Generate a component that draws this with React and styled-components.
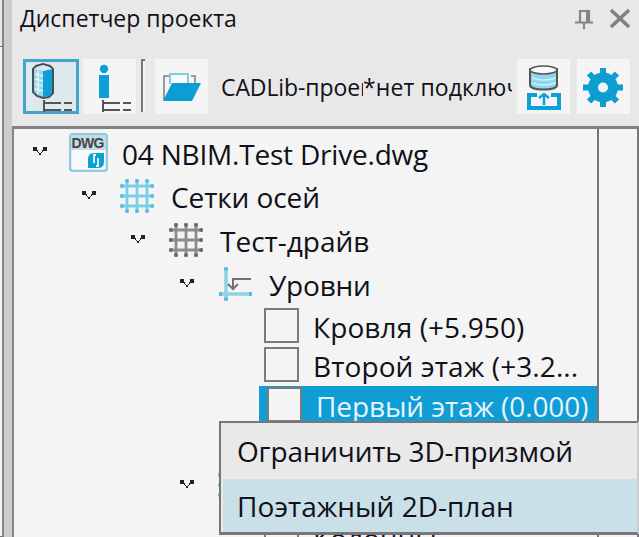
import React from "react";
import styled, { createGlobalStyle } from "styled-components";

const GlobalStyle = createGlobalStyle`
    * { box-sizing: border-box; }
    body {
        margin: 0;
        overflow: hidden;
        background: #ccc;
        font-family: "Open Sans", "Noto Sans", sans-serif;
        color: #101018;
    }
`;

const Window = styled.div`
    width: 639px;
    height: 537px;
    display: flex;
    position: relative;
    overflow: hidden;
`;

const LeftEdge = styled.div`
    width: 12px;
    display: flex;
    flex-direction: column;
    background: #cdcdcd;
`;

const EdgeTab = styled.div`
    width: 4px;
    height: ${props => props.$height};
    background: ${props => props.$color};
    border-right: 2px solid #858585;
    border-bottom: 1px solid #777;
`;

const Panel = styled.div`
    flex: 1;
    min-width: 0;
    display: flex;
    flex-direction: column;
    background: #e8e8e8;
`;

const TitleBar = styled.div`
    height: 40px;
    display: flex;
    align-items: flex-start;
    padding-left: 8px;
`;

const TitleIcons = styled.div`
    margin-left: auto;
    padding: 8px 9px 0 0;
    display: flex;
    gap: 17px;
`;

const Toolbar = styled.div`
    height: 86px;
    display: flex;
    align-items: flex-start;
    padding: 19px 0 0 11px;
`;

const ToolButton = styled.div`
    width: ${props => props.$width || "53px"};
    height: 55px;
    flex: none;
    margin-right: ${props => props.$gap || "0"};
    background: ${props => (props.$active ? "#dde9ed" : "#f5f5f5")};
    border: 3px solid ${props => (props.$active ? "#43a5c9" : "#f5f5f5")};

    svg { display: block; margin: -3px; }
`;

const Separator = styled.div`
    width: 4px;
    height: 53px;
    margin-right: 10px;
    border-left: 2px solid #777;
    border-top: 2px solid #777;
    background: #f4f4f4;
`;

const ProjectName = styled.div`
    width: 304px;
    height: 55px;
    flex: none;
    overflow: hidden;
    margin-right: 5px;
    padding: 10px 0 0 13px;
    display: flex;
`;

const Label = styled.span`
    display: block;
    width: ${props => props.$clip || "auto"};
    overflow: ${props => (props.$clip ? "hidden" : "visible")};
    flex: none;
    padding-top: ${props => props.$drop || "0"};
    white-space: nowrap;
    font-size: ${props => props.$size || "28px"};
    line-height: 36px;
    letter-spacing: ${props => props.$spacing || "0"};
    color: ${props => props.$color || "inherit"};
`;

const Tree = styled.div`
    height: 411px;
    display: flex;
    overflow: hidden;
    background: #f4f4f4;
    border-top: 3px solid #828282;
    border-left: 2px solid #858585;
`;

const TreeBody = styled.div`
    width: 585px;
    padding-top: 1px;
    border-right: 2px solid #777;
`;

const Gutter = styled.div`
    flex: 1;
    border-right: 2px solid #777;
`;

const Row = styled.div`
    height: ${props => props.$height || "44px"};
    display: flex;
    align-items: center;
    padding-left: ${props => props.$indent};
    margin-left: ${props => props.$offset || "0"};
    margin-top: ${props => props.$shift || "0"};
    background: ${props => (props.$selected ? "#109cd5" : "transparent")};
`;

const IconCell = styled.div`
    width: 52px;
    height: 40px;
    flex: none;
    margin-right: 8px;
    display: flex;
    align-items: center;
    justify-content: center;
`;

const Arrow = styled.svg`
    width: 14px;
    height: 8px;
    flex: none;
    margin-right: 15px;
    margin-bottom: 2px;
`;

const CheckBox = styled.div`
    width: 35px;
    height: 35px;
    flex: none;
    margin-right: 14px;
    background: #f5f5f5;
    border: 2px solid #7b7b7b;
`;

const Menu = styled.div`
    position: absolute;
    left: 219px;
    top: 421px;
    width: 420px;
    height: 114px;
    border: 2px solid #777;
    border-right: 2px solid #ccc;
    border-bottom-width: 3px;
    background: #e9e9e9;
`;

const MenuItem = styled.div`
    height: ${props => props.$height};
    margin-left: 2px;
    display: flex;
    align-items: center;
    padding-left: 14px;
    background: ${props => (props.$hover ? "#c9e0e8" : "transparent")};
`;

const Chevron = () => (
    <Arrow viewBox="0 0 14 8" shapeRendering="crispEdges">
        <path d="M0 0h4v4H0zM10 0h4v4h-4zM4 3h1v2H4zM9 3h1v2H9zM5 5h1v1H5zM8 5h1v1H8zM6 6h2v2H6z" fill="#222" />
    </Arrow>
);

const Grid = ({ color, dot }) => (
    <svg width="34" height="34" viewBox="0 0 34 34">
        <path d="M7 0V34M17 0V34M27 0V34M0 7H34M0 17H34M0 27H34" stroke={color} strokeWidth="2.8" fill="none" />
        <path d="M7 0.500V34M17 0.500V34M27 0.500V34" stroke={dot} strokeWidth="3.6" strokeDasharray="3 27" />
        <path d="M0.500 7H34M0.500 17H34M0.500 27H34" stroke={dot} strokeWidth="3.6" strokeDasharray="3 27" />
    </svg>
);

const BlueGrid = () => <Grid color="#7bcde8" dot="#56bce0" />;

const DwgIcon = () => (
    <svg width="39" height="39" viewBox="0 0 39 39">
        <rect x="1" y="1" width="37" height="37" rx="3" fill="#fafafa" stroke="#8bcbe2" strokeWidth="2.5" />
        <path d="M2 2H37V17H2Z" fill="#c3dce4" />
        <text x="2.5" y="15" fontFamily="Liberation Sans" fontWeight="700" fontSize="14" textLength="33" fill="#444">DWG</text>
        <path d="M19 26q0-6 6-6h10v9q0 6-6 6H19z" fill="#0ca0d3" />
        <path d="M27 22h-2v8M27 33h2v-8" stroke="#eef8fb" strokeWidth="1.8" fill="none" />
    </svg>
);

const LevelIcon = () => (
    <svg width="36" height="36" viewBox="0 0 36 36">
        <path d="M9 1V35M2 28H35" stroke="#8fd0e6" strokeWidth="3.5" />
        <path d="M7 3h4M7 33h4" stroke="#5bbbdc" strokeWidth="3" />
        <path d="M2 28h3M32 28h3" stroke="#5bbbdc" strokeWidth="4" />
        <path d="M34 13H16V23M11 18l5 5 5-5" stroke="#707070" strokeWidth="2" fill="none" />
    </svg>
);

const ListLines = ({ x = 0 }) => (
    <path
        transform={`translate(${x} 0)`}
        d="M21 41V53M21 44H38M41 44H49M21 51H38M41 51H49"
        stroke="#555"
        strokeWidth="2"
        fill="none"
    />
);

const rows = [
    { indent: "19px", icon: <DwgIcon />, text: "04 NBIM.Test Drive.dwg", spacing: "-0.2px", drop: "3px" },
    { indent: "68px", icon: <BlueGrid />, text: "Сетки осей", spacing: "-0.1px", drop: "2px" },
    { indent: "117px", icon: <Grid color="#8c8c8c" dot="#666" />, text: "Тест-драйв", spacing: "0", drop: "2px" },
    { indent: "166px", icon: <LevelIcon />, text: "Уровни", spacing: "-0.2px", drop: "2px" },
];

const App = () => (
    <>
        <GlobalStyle />
        <Window>
            <LeftEdge>
                <EdgeTab $height="47px" $color="#e8e8e8" />
                <EdgeTab $height="490px" $color="#f4f4f4" />
            </LeftEdge>
            <Panel>
                <TitleBar>
                    <Label $size="23px">Диспетчер проекта</Label>
                    <TitleIcons>
                        <svg width="18" height="22" viewBox="0 0 18 22">
                            <path d="M4 3H14V14M5 3V14M0 14.500H18M9 15V21" stroke="#858585" strokeWidth="2.2" fill="none" />
                            <path d="M11 3h4v11h-4z" fill="#858585" />
                        </svg>
                        <svg width="20" height="22" viewBox="0 0 20 22">
                            <path d="M1 2L19 19M19 2L1 19" stroke="#808080" strokeWidth="3.5" />
                        </svg>
                    </TitleIcons>
                </TitleBar>
                <Toolbar>
                    <ToolButton $active $width="56px" $gap="4px">
                        <svg width="56" height="55" viewBox="0 0 56 55">
                            <path d="M10 10l3-3 7-2 7 2 3 3v24l-4 4-6 1-6-2-4-4z" fill="#9bd5e9" stroke="#4a4f54" strokeWidth="2" />
                            <path d="M20 12l9-2v24l-3 3-6 1z" fill="#0ca0d7" />
                            <path d="M11 10l9 2 9-2-3-2-6-2-6 2z" fill="#d8e8ee" />
                            <path d="M12 15l8 2M12 20l8 2M12 25l8 2M12 30l8 2M15 12v23" stroke="#e0f3f9" strokeWidth="1.5" />
                            <ListLines />
                        </svg>
                    </ToolButton>
                    <ToolButton $gap="5px">
                        <svg width="54" height="55" viewBox="0 0 54 55">
                            <circle cx="21" cy="10" r="4.2" fill="#0ca0d7" />
                            <path d="M16 16h10v23H16z" fill="#0ca0d7" />
                            <ListLines x={-1} />
                        </svg>
                    </ToolButton>
                    <Separator />
                    <ToolButton>
                        <svg width="54" height="55" viewBox="0 0 54 55">
                            <path d="M9 41V17H14M36 17H40V24" stroke="#999" strokeWidth="2" fill="none" />
                            <path d="M15 25V15H33V25" fill="#fafafa" stroke="#80cce5" strokeWidth="2" />
                            <path d="M17 24H46L37 42H8z" fill="#0c9dd3" />
                        </svg>
                    </ToolButton>
                    <ProjectName>
                        <Label $size="23px" $clip="142px" $spacing="-0.1px">CADLib-проект</Label>
                        <Label $size="23px" $clip="149px" $spacing="0.1px">*нет подключения</Label>
                    </ProjectName>
                    <ToolButton $gap="7px">
                        <svg width="54" height="55" viewBox="0 0 54 55">
                            <path d="M13 10V26c0 6 27 6 27 0V10z" fill="#8ed7ee" stroke="#555" strokeWidth="2" />
                            <ellipse cx="26.500" cy="11" rx="13.500" ry="4" fill="#fafafa" stroke="#555" strokeWidth="1.600" />
                            <path d="M15 19q11 4 24 0M15 24q11 4 24 0" stroke="#d0f0fa" strokeWidth="1.500" fill="none" />
                            <path d="M20 36H12V49H42V36H34" stroke="#0ca0d7" strokeWidth="4" fill="none" />
                            <path d="M27 46V35M22 39l5-4 5 4" stroke="#0ca0d7" strokeWidth="2.500" fill="none" />
                        </svg>
                    </ToolButton>
                    <ToolButton>
                        <svg width="54" height="55" viewBox="0 0 54 55">
                            <path d="M26 9V48M6 28.500H46M12 14.500L40 42.500M40 14.500L12 42.500" stroke="#0c9dd3" strokeWidth="6" />
                            <circle cx="26" cy="28.500" r="15" fill="#0c9dd3" />
                            <circle cx="26" cy="28.500" r="5" fill="#f5f5f5" />
                        </svg>
                    </ToolButton>
                </Toolbar>
                <Tree>
                    <TreeBody>
                        {rows.map(row => (
                            <Row key={row.text} $indent={row.indent}>
                                <Chevron />
                                <IconCell>{row.icon}</IconCell>
                                <Label $drop={row.drop} $spacing={row.spacing}>{row.text}</Label>
                            </Row>
                        ))}
                        <Row $indent="250px" $height="39px">
                            <CheckBox />
                            <Label $drop="3px" $spacing="0.1px">Кровля (+5.950)</Label>
                        </Row>
                        <Row $indent="250px" $height="39px">
                            <CheckBox />
                            <Label $drop="3px" $spacing="0.1px">Второй этаж (+3.2...</Label>
                        </Row>
                        <Row $selected $indent="8px" $offset="245px" $shift="2px" $height="37px">
                            <CheckBox />
                            <Label $drop="3px" $spacing="-0.1px" $color="#e5f5fb">Первый этаж (0.000)</Label>
                        </Row>
                        <Row $indent="166px" $height="124px">
                            <Chevron />
                            <IconCell><BlueGrid /></IconCell>
                        </Row>
                        <Row $indent="250px" $height="39px" $shift="-29px">
                            <CheckBox />
                            <Label>Колонны</Label>
                        </Row>
                    </TreeBody>
                    <Gutter />
                </Tree>
            </Panel>
            <Menu>
                <MenuItem $height="56px">
                    <Label $spacing="-0.2px">Ограничить 3D-призмой</Label>
                </MenuItem>
                <MenuItem $hover $height="53px">
                    <Label $drop="1px">Поэтажный 2D-план</Label>
                </MenuItem>
            </Menu>
        </Window>
    </>
);

export default App;
